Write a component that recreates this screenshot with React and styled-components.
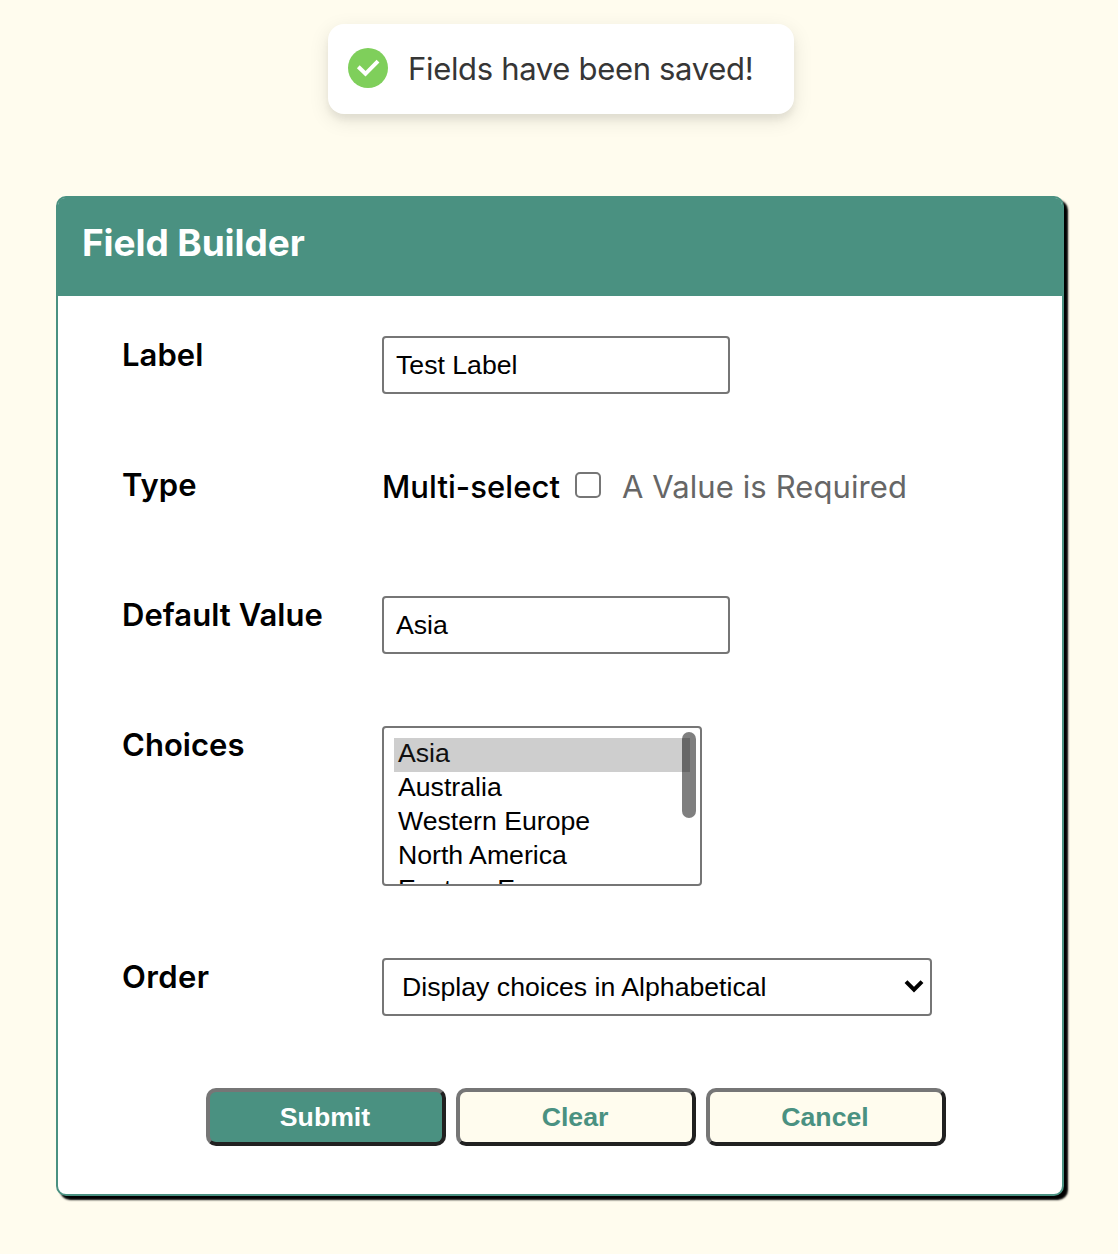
import React, { useState } from "react";
import styled, { createGlobalStyle } from "styled-components";

const teal = "#4a9181";
const cream = "#fffcee";

const GlobalStyle = createGlobalStyle`
  *, *::before, *::after { box-sizing: border-box; }
  body {
    margin: 0;
    background: ${cream};
    font-family: Inter, "Liberation Sans", sans-serif;
    color: #000;
  }
`;

const Page = styled.main`
  display: flex;
  flex-direction: column;
  min-height: 1254px;
  padding: 24px 54px 58px 56px;
`;

const Toast = styled.div`
  display: flex;
  align-items: center;
  align-self: center;
  gap: 20px;
  width: 466px;
  height: 90px;
  margin: 0 0 82px 2px;
  padding: 0 20px;
  border-radius: 16px;
  background: #fff;
  color: #363636;
  font-size: 31px;
  box-shadow: 0 6px 20px rgba(0, 0, 0, 0.1), 0 6px 6px rgba(0, 0, 0, 0.05);
`;

const ToastIcon = styled.svg`
  flex: none;
  width: 40px;
  height: 40px;
  margin-top: -2px;
`;

const ToastText = styled.span`
  padding-bottom: 2px;
  white-space: nowrap;
  letter-spacing: -0.32px;
`;

const Card = styled.section`
  width: 1008px;
  height: 1000px;
  border: 2px solid ${teal};
  border-radius: 10px;
  background: #fff;
  box-shadow: 4px 4px 2px #000;
`;

const CardHeader = styled.header`
  height: 98px;
  padding: 21px 24px;
  background: ${teal};
  border-radius: 7px 7px 0 0;
`;

const Title = styled.h1`
  margin: 0;
  color: #fff;
  font-size: 37px;
  font-weight: 700;
  line-height: 48px;
  letter-spacing: -0.1px;
`;

const Form = styled.form`
  display: flex;
  flex-direction: column;
  gap: 72px;
  padding: 40px 64px 48px;
`;

const Row = styled.div`
  display: grid;
  grid-template-columns: 260px 1fr;
  align-items: start;
  min-height: 58px;
`;

const Label = styled.label`
  font-size: 31px;
  font-weight: 600;
  line-height: 37px;
  white-space: nowrap;
  letter-spacing: ${(p) => p.$tracking || "0.04px"};
`;

const TextInput = styled.input`
  width: 348px;
  height: 58px;
  padding: 0 12px;
  border: 2px solid #767676;
  border-radius: 4px;
  outline: 0;
  background: #fff;
  color: #000;
  font: 26.67px "Liberation Sans", sans-serif;
`;

const TypeLine = styled.div`
  display: flex;
  align-items: center;
  height: 40px;
  font-size: 31px;
  white-space: nowrap;
`;

const TypeName = styled.span`
  width: 178px;
  font-weight: 500;
  letter-spacing: 0.06px;
`;

const Checkbox = styled.input`
  appearance: none;
  flex: none;
  width: 26px;
  height: 26px;
  margin: 0 21px 2px 15px;
  border: 2px solid #767676;
  border-radius: 5px;
  background: #fff;
  &:checked { background: ${teal}; }
`;

const Required = styled.label`
  color: #666;
  letter-spacing: 0.1px;
`;

const ListBox = styled.div`
  position: relative;
  width: 320px;
  height: 160px;
  padding: 10px;
  overflow: hidden;
  border: 2px solid #767676;
  border-radius: 4px;
`;

const Option = styled.div`
  height: 34px;
  padding: 0 4px;
  background: ${(p) => (p.$selected ? "#cecece" : "transparent")};
  color: ${(p) => (p.$selected ? "#101010" : "#000")};
  font: 26.67px/30px "Liberation Sans", sans-serif;
  cursor: default;
`;

const ScrollThumb = styled.div`
  position: absolute;
  top: 4px;
  right: 4px;
  width: 14px;
  height: 86px;
  border-radius: 7px;
  background: rgba(0, 0, 0, 0.5);
`;

const SelectWrap = styled.div`
  position: relative;
  width: 550px;
`;

const Select = styled.select`
  appearance: none;
  display: block;
  width: 100%;
  height: 58px;
  padding: 0 40px 0 18px;
  border: 2px solid #767676;
  border-radius: 4px;
  background: #fff;
  color: #000;
  font: 26.67px "Liberation Sans", sans-serif;
`;

const Chevron = styled.svg`
  position: absolute;
  top: 20px;
  right: 8px;
  width: 20px;
  height: 16px;
  pointer-events: none;
`;

const Actions = styled.div`
  display: flex;
  gap: 10px;
  padding-left: 84px;
`;

const Button = styled.button`
  width: 240px;
  height: 58px;
  padding: 1px 2px 0 0;
  border: 4px solid;
  border-color: #767676 #212121 #212121 #767676;
  border-radius: 10px;
  background: ${(p) => (p.$primary ? teal : cream)};
  color: ${(p) => (p.$primary ? "#fff" : teal)};
  font: bold 26.67px "Liberation Sans", sans-serif;
`;

const regions = ["Asia", "Australia", "Western Europe", "North America", "Eastern Europe"];

export default function App() {
  const [selected, setSelected] = useState("Asia");

  return (
    <Page>
      <GlobalStyle />
      <Toast role="status">
        <ToastIcon viewBox="0 0 40 40">
          <circle cx="20" cy="20" r="20" fill="#7fcf5b" />
          <path d="M10.3 18.8 L17.5 25.8 L30 13.2" fill="none" stroke="#fff" strokeWidth="4" />
        </ToastIcon>
        <ToastText>Fields have been saved!</ToastText>
      </Toast>

      <Card>
        <CardHeader>
          <Title>Field Builder</Title>
        </CardHeader>
        <Form onSubmit={(e) => e.preventDefault()}>
          <Row>
            <Label htmlFor="label">Label</Label>
            <TextInput id="label" defaultValue="Test Label" />
          </Row>
          <Row>
            <Label as="span">Type</Label>
            <TypeLine>
              <TypeName>Multi-select</TypeName>
              <Checkbox id="required" type="checkbox" />
              <Required htmlFor="required">A Value is Required</Required>
            </TypeLine>
          </Row>
          <Row>
            <Label htmlFor="default">Default Value</Label>
            <TextInput id="default" defaultValue="Asia" />
          </Row>
          <Row>
            <Label as="span">Choices</Label>
            <ListBox role="listbox">
              {regions.map((name) => (
                <Option
                  key={name}
                  role="option"
                  aria-selected={name === selected}
                  $selected={name === selected}
                  onClick={() => setSelected(name)}
                >
                  {name}
                </Option>
              ))}
              <ScrollThumb />
            </ListBox>
          </Row>
          <Row>
            <Label htmlFor="order" $tracking="0.4px">Order</Label>
            <SelectWrap>
              <Select id="order">
                <option>Display choices in Alphabetical</option>
              </Select>
              <Chevron viewBox="0 0 20 16">
                <path d="M2 3.7 L10 11.7 L18 3.7" fill="none" stroke="#000" strokeWidth="4" />
              </Chevron>
            </SelectWrap>
          </Row>
          <Actions>
            <Button $primary type="submit">Submit</Button>
            <Button type="reset">Clear</Button>
            <Button type="button">Cancel</Button>
          </Actions>
        </Form>
      </Card>
    </Page>
  );
}
